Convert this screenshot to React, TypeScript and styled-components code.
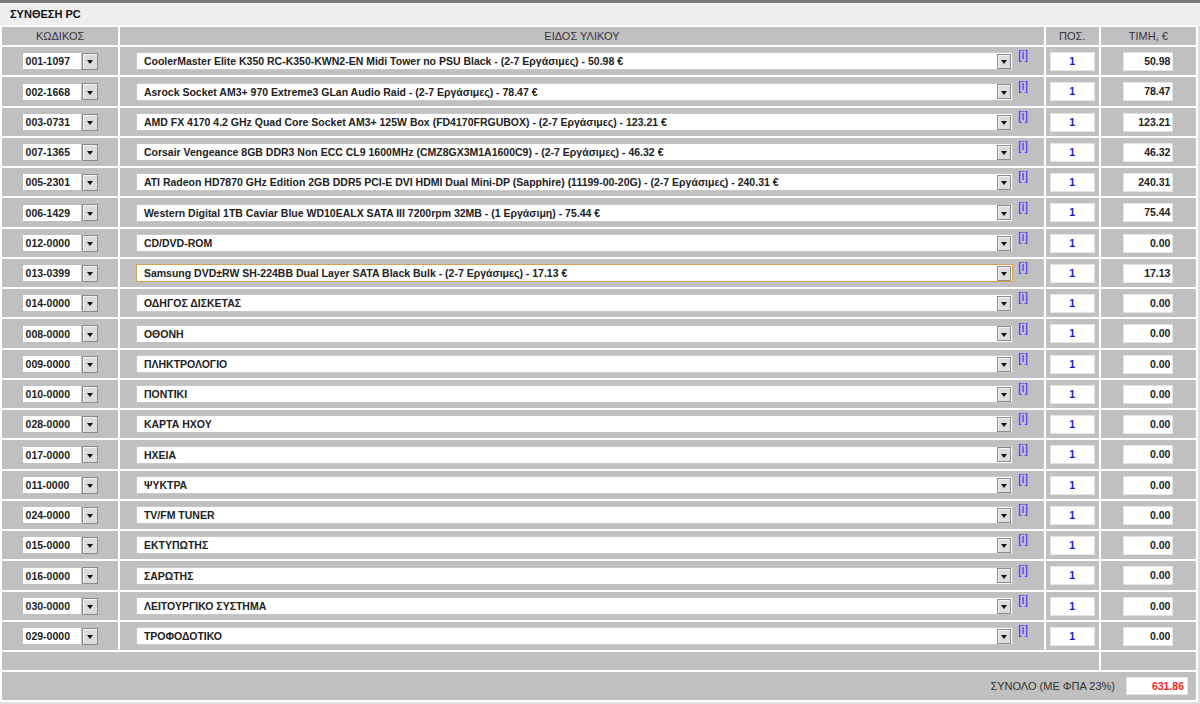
import React from 'react';
import styled, { createGlobalStyle } from 'styled-components';

interface IPart {
    code: string;
    name: string;
    price: number;
    focused?: boolean;
}

const parts: IPart[] = [
    { code: '001-1097', name: 'CoolerMaster Elite K350 RC-K350-KWN2-EN Midi Tower no PSU Black - (2-7 Εργάσιμες) - 50.98 €', price: 50.98 },
    { code: '002-1668', name: 'Asrock Socket AM3+ 970 Extreme3 GLan Audio Raid - (2-7 Εργάσιμες) - 78.47 €', price: 78.47 },
    { code: '003-0731', name: 'AMD FX 4170 4.2 GHz Quad Core Socket AM3+ 125W Box (FD4170FRGUBOX) - (2-7 Εργάσιμες) - 123.21 €', price: 123.21 },
    { code: '007-1365', name: 'Corsair Vengeance 8GB DDR3 Non ECC CL9 1600MHz (CMZ8GX3M1A1600C9) - (2-7 Εργάσιμες) - 46.32 €', price: 46.32 },
    { code: '005-2301', name: 'ATI Radeon HD7870 GHz Edition 2GB DDR5 PCI-E DVI HDMI Dual Mini-DP (Sapphire) (11199-00-20G) - (2-7 Εργάσιμες) - 240.31 €', price: 240.31 },
    { code: '006-1429', name: 'Western Digital 1TB Caviar Blue WD10EALX SATA III 7200rpm 32MB - (1 Εργάσιμη) - 75.44 €', price: 75.44 },
    { code: '012-0000', name: 'CD/DVD-ROM', price: 0 },
    { code: '013-0399', name: 'Samsung DVD±RW SH-224BB Dual Layer SATA Black Bulk - (2-7 Εργάσιμες) - 17.13 €', price: 17.13, focused: true },
    { code: '014-0000', name: 'ΟΔΗΓΟΣ ΔΙΣΚΕΤΑΣ', price: 0 },
    { code: '008-0000', name: 'ΟΘΟΝΗ', price: 0 },
    { code: '009-0000', name: 'ΠΛΗΚΤΡΟΛΟΓΙΟ', price: 0 },
    { code: '010-0000', name: 'ΠΟΝΤΙΚΙ', price: 0 },
    { code: '028-0000', name: 'ΚΑΡΤΑ ΗΧΟΥ', price: 0 },
    { code: '017-0000', name: 'ΗΧΕΙΑ', price: 0 },
    { code: '011-0000', name: 'ΨΥΚΤΡΑ', price: 0 },
    { code: '024-0000', name: 'TV/FM TUNER', price: 0 },
    { code: '015-0000', name: 'ΕΚΤΥΠΩΤΗΣ', price: 0 },
    { code: '016-0000', name: 'ΣΑΡΩΤΗΣ', price: 0 },
    { code: '030-0000', name: 'ΛΕΙΤΟΥΡΓΙΚΟ ΣΥΣΤΗΜΑ', price: 0 },
    { code: '029-0000', name: 'ΤΡΟΦΟΔΟΤΙΚΟ', price: 0 },
];

const App: React.FunctionComponent = () => {
    const total = parts.reduce((sum, p) => sum + p.price, 0);

    return (
        <>
            <GlobalStyle />
            <Panel>
                <Title>ΣΥΝΘΕΣΗ PC</Title>
                <Table>
                    <thead>
                        <tr>
                            <Th $w={116}>ΚΩΔΙΚΟΣ</Th>
                            <Th $w={922}>ΕΙΔΟΣ ΥΛΙΚΟΥ</Th>
                            <Th $w={53}>ΠΟΣ.</Th>
                            <Th $w={95}>ΤΙΜΗ, €</Th>
                        </tr>
                    </thead>
                    <tbody>
                        {parts.map((p) => (
                            <Row key={p.code}>
                                <Cell>
                                    <Combo>
                                        <CodeBox>{p.code}</CodeBox>
                                        <DropButton $small={false}>
                                            <Arrow />
                                        </DropButton>
                                    </Combo>
                                </Cell>
                                <Cell>
                                    <Combo>
                                        <Select $focused={!!p.focused}>
                                            <SelectText>{p.name}</SelectText>
                                            <DropButton $small>
                                                <Arrow />
                                            </DropButton>
                                        </Select>
                                        <Info>[i]</Info>
                                    </Combo>
                                </Cell>
                                <Cell>
                                    <QtyBox>1</QtyBox>
                                </Cell>
                                <Cell>
                                    <PriceBox>{p.price.toFixed(2)}</PriceBox>
                                </Cell>
                            </Row>
                        ))}
                        <SpacerRow>
                            <td colSpan={3} />
                            <td />
                        </SpacerRow>
                        <TotalRow>
                            <td colSpan={4}>
                                <TotalWrap>
                                    <TotalLabel>ΣΥΝΟΛΟ (ΜΕ ΦΠΑ 23%)</TotalLabel>
                                    <TotalBox>{total.toFixed(2)}</TotalBox>
                                </TotalWrap>
                            </td>
                        </TotalRow>
                    </tbody>
                </Table>
            </Panel>
        </>
    );
};

export default App;

const GlobalStyle = createGlobalStyle`
    html, body {
        margin: 0;
        padding: 0;
        background: #dedede;
        font-family: "Liberation Sans", Arial, sans-serif;
    }
`;

const Panel = styled.div`
    width: 1200px;
    height: 704px;
    border-top: 3px solid #7a7a7a;
    background: #dedede;
`;

const Title = styled.div`
    height: 22px;
    line-height: 22px;
    padding-left: 10px;
    background: #efefef;
    font-size: 11px;
    font-weight: bold;
    color: #111;
`;

const Table = styled.table`
    width: 1198px;
    table-layout: fixed;
    border-collapse: separate;
    border-spacing: 2px;
    background: #ffffff;
`;

const Th = styled.th<{ $w: number }>`
    width: ${(p) => p.$w}px;
    height: 18px;
    padding: 0;
    background: #c0c0c0;
    font-size: 11px;
    font-weight: normal;
    color: #3a3340;
    text-align: center;
    vertical-align: middle;
`;

// 20 rows share 604px in the original, so some rows are a pixel taller
const Row = styled.tr`
    height: 28px;
    &:nth-child(4n + 2) {
        height: 29px;
    }
`;

const Cell = styled.td`
    padding: 0;
    background: #c0c0c0;
    text-align: center;
    vertical-align: middle;
`;

const Combo = styled.div`
    display: flex;
    justify-content: center;
    align-items: center;
`;

const CodeBox = styled.div`
    width: 55px;
    height: 16px;
    line-height: 16px;
    padding-left: 3px;
    background: #fff;
    font-size: 10.5px;
    font-weight: bold;
    color: #222;
    text-align: left;
`;

const DropButton = styled.div<{ $small: boolean }>`
    box-sizing: border-box;
    width: ${(p) => (p.$small ? 14 : 16)}px;
    height: ${(p) => (p.$small ? 15 : 17)}px;
    margin-left: ${(p) => (p.$small ? 0 : 1)}px;
    display: flex;
    align-items: center;
    justify-content: center;
    background: #dcdcdc;
    border: 1px solid #8c8c8c;
    box-shadow: inset 1px 1px 0 #f4f4f4;
    flex-shrink: 0;
`;

const Arrow = styled.div`
    width: 0;
    height: 0;
    margin-top: 2px;
    border-left: 3.5px solid transparent;
    border-right: 3.5px solid transparent;
    border-top: 4px solid #111;
`;

const Select = styled.div<{ $focused: boolean }>`
    box-sizing: border-box;
    width: 877px;
    height: 18px;
    display: flex;
    align-items: center;
    padding: 0 1px 0 7px;
    background: #fff;
    border: 1px solid ${(p) => (p.$focused ? '#d9a24e' : '#c8c8c8')};
`;

const SelectText = styled.div`
    flex: 1;
    font-size: 10.5px;
    font-weight: bold;
    color: #222;
    text-align: left;
    white-space: nowrap;
    overflow: hidden;
`;

const Info = styled.span`
    align-self: flex-start;
    margin: -5px 0 0 5px;
    font-size: 13px;
    color: #3a3aff;
`;

const QtyBox = styled.div`
    box-sizing: border-box;
    width: 45px;
    height: 19px;
    line-height: 17px;
    margin: 0 auto;
    background: #fff;
    border: 1px solid #e4e4e4;
    font-size: 10.5px;
    font-weight: bold;
    color: #1818d8;
    text-align: center;
`;

const PriceBox = styled.div`
    box-sizing: border-box;
    width: 50px;
    height: 19px;
    line-height: 17px;
    margin: 0 auto;
    padding-right: 2px;
    background: #fff;
    border: 1px solid #e4e4e4;
    font-size: 10.5px;
    font-weight: bold;
    color: #222;
    text-align: right;
`;

const SpacerRow = styled.tr`
    height: 18px;
    td {
        padding: 0;
        background: #c0c0c0;
    }
`;

const TotalRow = styled.tr`
    height: 28px;
    td {
        padding: 0;
        background: #c0c0c0;
    }
`;

const TotalWrap = styled.div`
    display: flex;
    justify-content: flex-end;
    align-items: center;
    padding-right: 8px;
`;

const TotalLabel = styled.span`
    font-size: 11px;
    color: #333;
    margin-right: 11px;
`;

const TotalBox = styled.div`
    box-sizing: border-box;
    width: 62px;
    height: 18px;
    line-height: 16px;
    padding-right: 3px;
    background: #fff;
    border: 1px solid #e4e4e4;
    font-size: 10.5px;
    font-weight: bold;
    color: #ff2222;
    text-align: right;
`;
